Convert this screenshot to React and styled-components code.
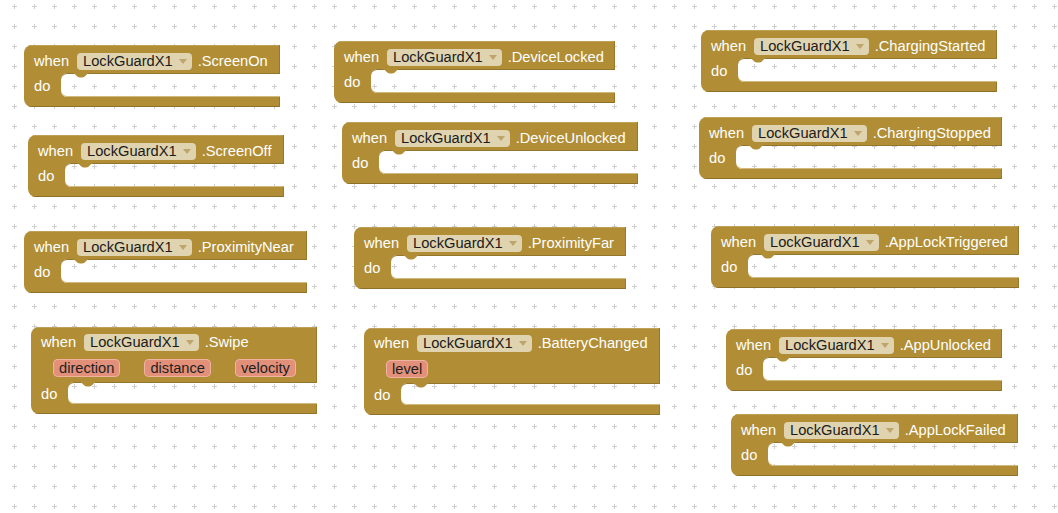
import React from 'react';
import styled, { createGlobalStyle } from 'styled-components';

const GlobalStyle = createGlobalStyle`
  html, body { margin: 0; padding: 0; background: #fff; overflow: hidden; }
  #root { width: 1058px; height: 513px; }
`;

const BROWN = '#b18e35';

const Workspace = styled.div`
  position: relative;
  width: 1058px;
  height: 513px;
  background: #fff;
  overflow: hidden;
  font-family: "Liberation Sans", Arial, sans-serif;
`;

const Grid = styled.svg`
  position: absolute;
  left: 0;
  top: 0;
  width: 100%;
  height: 100%;
`;

const Block = styled.div`
  position: absolute;
  z-index: 0;
  left: ${(p) => p.$x}px;
  top: ${(p) => p.$y}px;
  width: ${(p) => p.$w}px;
  display: flex;
  flex-direction: column;
  border-radius: 8px 0 0 8px;
  overflow: hidden;
  color: #fff;
  font-size: 14.67px;
  white-space: nowrap;
`;

const Header = styled.div`
  position: relative;
  z-index: 1;
  box-sizing: border-box;
  height: 28px;
  padding-top: ${(p) => (p.$tight ? 2 : 4)}px;
  display: flex;
  align-items: center;
  padding-left: 10px;
  background: ${BROWN};
  box-shadow: inset -1px 0 0 #97782d, inset 0 1px 0 #bfa057;
`;

const Word = styled.span`
  line-height: 1;
`;

const Dropdown = styled.span`
  display: inline-flex;
  align-items: center;
  height: 17px;
  margin-left: 8px;
  padding: 0 5px 0 6px;
  border-radius: 4px;
  background: #e0d3b0;
  color: #1b1b1b;
  line-height: 1;
`;

const Arrow = styled.svg`
  margin-left: 6px;
  width: 8px;
  height: 5px;
`;

const EventName = styled.span`
  margin-left: 6px;
  line-height: 1;
`;

const Params = styled.div`
  position: relative;
  z-index: 1;
  height: 27px;
  display: flex;
  align-items: flex-start;
  gap: 24px;
  padding-left: 22px;
  background: ${BROWN};
  box-shadow: inset -1px 0 0 #97782d;
`;

const Param = styled.span`
  box-sizing: border-box;
  height: 18px;
  margin-top: 4px;
  display: inline-flex;
  align-items: center;
  padding: 1px 6px 0;
  border-radius: 5px;
  background: #e2907a;
  box-shadow: inset 0 0 0 1px #efb3a0;
  color: #1f1f1f;
  line-height: 1;
`;

const Body = styled.div`
  display: flex;
  height: ${(p) => (p.$short ? 22 : 24)}px;
`;

const Arm = styled.div`
  box-sizing: border-box;
  width: 37px;
  flex: none;
  display: flex;
  align-items: center;
  padding-left: 10px;
  padding-top: 2px;
  background: ${BROWN};
  line-height: 1;
`;

const Slot = styled.div`
  position: relative;
  flex: 1;
  border-radius: 6px 0 0 6px;
  box-shadow: 0 0 0 7px ${BROWN}, inset 0 1px 0 #93762d, inset 0 -1px 0 #d2ba7e;
`;

const Notch = styled.svg`
  position: absolute;
  left: 11px;
  top: 0;
  width: 18px;
  height: 5px;
`;

const Bottom = styled.div`
  position: relative;
  z-index: 1;
  height: 10px;
  background: ${BROWN};
  box-shadow: inset -1px 0 0 #97782d, inset 0 -1px 0 #8e7129;
`;

const blocks = [
  { x: 24, y: 45, w: 256, ev: 'ScreenOn' },
  { x: 28, y: 135, w: 256, ev: 'ScreenOff' },
  { x: 24, y: 231, w: 283, ev: 'ProximityNear' },
  { x: 31, y: 327, w: 286, ev: 'Swipe', params: ['direction', 'distance', 'velocity'] },
  { x: 334, y: 41, w: 281, ev: 'DeviceLocked' },
  { x: 342, y: 122, w: 296, ev: 'DeviceUnlocked' },
  { x: 354, y: 227, w: 272, ev: 'ProximityFar' },
  { x: 364, y: 328, w: 296, ev: 'BatteryChanged', params: ['level'] },
  { x: 701, y: 30, w: 296, ev: 'ChargingStarted' },
  { x: 699, y: 117, w: 303, ev: 'ChargingStopped' },
  { x: 711, y: 226, w: 308, ev: 'AppLockTriggered' },
  { x: 726, y: 329, w: 276, ev: 'AppUnlocked' },
  { x: 731, y: 414, w: 287, ev: 'AppLockFailed' },
];

function EventBlock({ x, y, w, ev, params }) {
  return (
    <Block $x={x} $y={y} $w={w}>
      <Header $tight={!!params}>
        <Word>when</Word>
        <Dropdown>
          LockGuardX1
          <Arrow viewBox="0 0 8 5">
            <path d="M0 0 H8 L4 5 Z" fill="#bda56b" />
          </Arrow>
        </Dropdown>
        <EventName>.{ev}</EventName>
      </Header>
      {params && (
        <Params>
          {params.map((p) => (
            <Param key={p}>{p}</Param>
          ))}
        </Params>
      )}
      <Body $short={!!params}>
        <Arm>do</Arm>
        <Slot>
          <Notch viewBox="0 0 18 5">
            <path d="M0 0 C4 0 4 4.5 8 4.5 H10 C14 4.5 14 0 18 0 Z" fill={BROWN} />
          </Notch>
        </Slot>
      </Body>
      <Bottom />
    </Block>
  );
}

export default function App() {
  return (
    <Workspace>
      <GlobalStyle />
      <Grid>
        <defs>
          <pattern id="plusgrid" x="4" y="-4" width="20" height="20" patternUnits="userSpaceOnUse">
            <rect x="8" y="10" width="5" height="1" fill="#cfcfcf" />
            <rect x="10" y="8" width="1" height="5" fill="#cfcfcf" />
          </pattern>
        </defs>
        <rect width="100%" height="100%" fill="url(#plusgrid)" />
      </Grid>
      {blocks.map((b) => (
        <EventBlock key={b.ev} {...b} />
      ))}
    </Workspace>
  );
}
